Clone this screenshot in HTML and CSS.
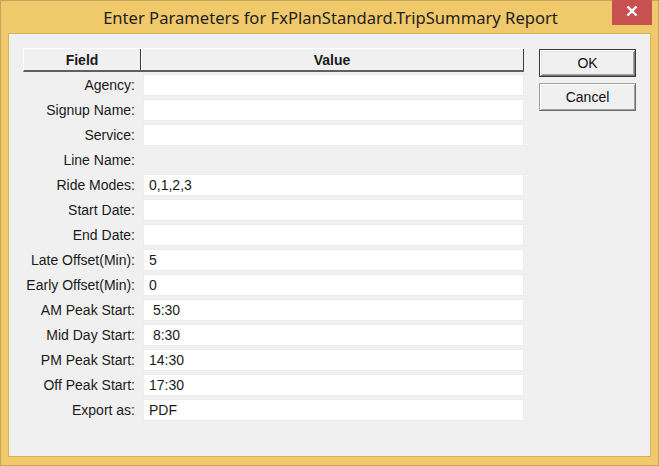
FILE: index.html
```html
<!DOCTYPE html>
<html>
<head>
<meta charset="utf-8">
<link rel="stylesheet" href="styles.css">
</head>
<body>
<div class="window">
  <div class="titlebar">
    <div class="title">Enter Parameters for FxPlanStandard.TripSummary Report</div>
    <div class="close">
      <svg width="12" height="10" viewBox="0 0 12 10"><path d="M1.5 0.5 L10.5 9.5 M10.5 0.5 L1.5 9.5" stroke="#fff" stroke-width="2.4" fill="none"/></svg>
    </div>
  </div>
  <div class="client">
    <div class="grid">
      <div class="hdr">
        <div class="hcell field">Field</div>
        <div class="hcell value">Value</div>
      </div>
      <div class="rows">
        <div class="row"><div class="lbl">Agency:</div><div class="box"></div></div>
        <div class="row"><div class="lbl">Signup Name:</div><div class="box"></div></div>
        <div class="row"><div class="lbl">Service:</div><div class="box"></div></div>
        <div class="row"><div class="lbl">Line Name:</div><div class="box empty"></div></div>
        <div class="row"><div class="lbl">Ride Modes:</div><div class="box">0,1,2,3</div></div>
        <div class="row"><div class="lbl">Start Date:</div><div class="box"></div></div>
        <div class="row"><div class="lbl">End Date:</div><div class="box"></div></div>
        <div class="row"><div class="lbl">Late Offset(Min):</div><div class="box">5</div></div>
        <div class="row"><div class="lbl">Early Offset(Min):</div><div class="box">0</div></div>
        <div class="row"><div class="lbl">AM Peak Start:</div><div class="box">&nbsp;5:30</div></div>
        <div class="row"><div class="lbl">Mid Day Start:</div><div class="box">&nbsp;8:30</div></div>
        <div class="row"><div class="lbl">PM Peak Start:</div><div class="box">14:30</div></div>
        <div class="row"><div class="lbl">Off Peak Start:</div><div class="box">17:30</div></div>
        <div class="row"><div class="lbl">Export as:</div><div class="box">PDF</div></div>
      </div>
    </div>
    <div class="buttons">
      <div class="btn default">OK</div>
      <div class="btn">Cancel</div>
    </div>
  </div>
</div>
</body>
</html>
```

FILE: styles.css
```css
html, body {
  margin: 0;
  padding: 0;
  background: #f0c96b;
}
.window {
  width: 659px;
  height: 466px;
  box-sizing: border-box;
  border: 1px solid #c7a458;
  background: #f0c96b;
  padding: 0 7px 8px 7px;
  display: flex;
  flex-direction: column;
}
.titlebar {
  height: 32px;
  display: flex;
  align-items: flex-start;
  justify-content: center;
  position: relative;
}
.title {
  font-family: "Noto Sans", "Open Sans", sans-serif;
  font-size: 16.6px;
  color: #1e1e1e;
  line-height: 33px;
  margin-left: 2px;
}
.close {
  position: absolute;
  right: -1px;
  top: -1px;
  width: 40px;
  height: 25px;
  background: #c75050;
  display: flex;
  align-items: center;
  justify-content: center;
}
.close svg { margin-top: -3px; }
.client {
  flex: 1;
  border: 1px solid #d2b160;
  background: #f0f0f0;
  display: flex;
  align-items: flex-start;
  padding: 14px 0 0 14px;
  gap: 15px;
  font-family: "Liberation Sans", Arial, sans-serif;
  font-size: 14px;
  color: #1a1a1a;
}
.grid {
  width: 501px;
}
.hdr {
  display: flex;
  height: 24px;
  box-sizing: border-box;
  border-top: 1px solid #ffffff;
  border-left: 1px solid #ffffff;
  border-bottom: 2px solid #5f5f5f;
}
.hcell {
  font-weight: bold;
  text-align: center;
  line-height: 22px;
  box-sizing: border-box;
}
.hcell.field {
  width: 117px;
  border-right: 1px solid #3c3c3c;
  box-shadow: 1px 0 0 #ffffff;
}
.hcell.value {
  flex: 1;
  border-right: 1px solid #3c3c3c;
}
.rows {
  padding-top: 3px;
  display: flex;
  flex-direction: column;
  gap: 5px;
}
.row {
  display: flex;
  height: 20px;
  line-height: 20px;
}
.lbl {
  width: 112px;
  padding-right: 9px;
  text-align: right;
  white-space: nowrap;
}
.box {
  width: 379px;
  background: #ffffff;
  padding-left: 5px;
  box-sizing: border-box;
  box-shadow: 0 0 0 1px #ececec;
  white-space: pre;
}
.box.empty {
  background: transparent;
  box-shadow: none;
}
.buttons {
  display: flex;
  flex-direction: column;
  gap: 6px;
  padding-top: 1px;
}
.btn {
  width: 97px;
  height: 28px;
  box-sizing: border-box;
  border: 1px solid #6e6e6e;
  border-top-color: #a0a0a0;
  border-left-color: #a0a0a0;
  box-shadow: inset 1px 1px 0 #ffffff, inset -1px -1px 0 #a0a0a0;
  background: #f0f0f0;
  text-align: center;
  line-height: 26px;
  font-size: 14px;
  color: #111;
}
.btn.default {
  border: 1px solid #3a3a3a;
  box-shadow: inset 1px 1px 0 #ffffff, inset -1px -1px 0 #7a7a7a, inset 2px 2px 0 #e4e4e4, inset -2px -2px 0 #a0a0a0;
}
```
